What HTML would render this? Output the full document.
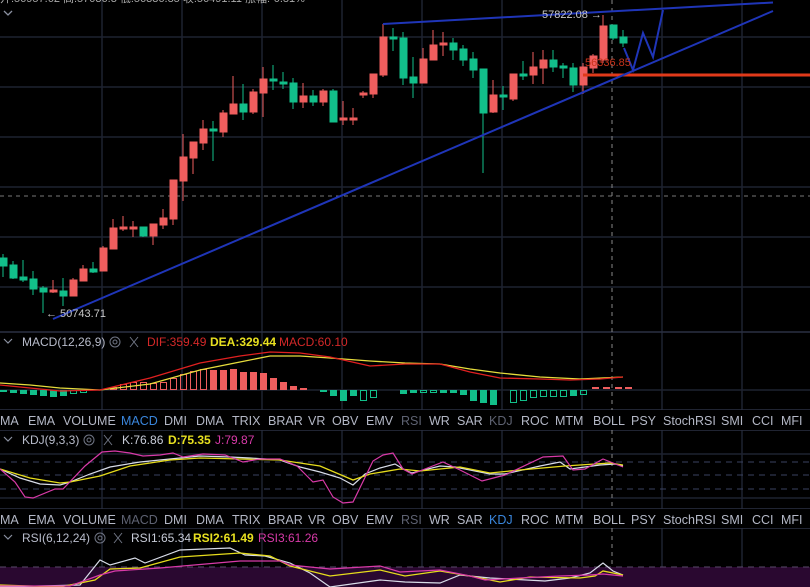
<!DOCTYPE html>
<html><head><meta charset="utf-8"><style>
html,body{margin:0;padding:0;background:#000;width:810px;height:587px;overflow:hidden}
svg{display:block;font-family:"Liberation Sans",sans-serif}
</style></head><body>
<svg width="810" height="587" viewBox="0 0 810 587" xmlns="http://www.w3.org/2000/svg">
<rect width="810" height="587" fill="#000"/>
<!-- grid -->
<g stroke="#1e2230" stroke-width="1.5">
<line x1="102" y1="0" x2="102" y2="587"/><line x1="182" y1="0" x2="182" y2="587"/><line x1="262" y1="0" x2="262" y2="587"/><line x1="342" y1="0" x2="342" y2="587"/><line x1="422" y1="0" x2="422" y2="587"/><line x1="502" y1="0" x2="502" y2="587"/><line x1="582" y1="0" x2="582" y2="587"/><line x1="662" y1="0" x2="662" y2="587"/><line x1="742" y1="0" x2="742" y2="587"/>
<line x1="0" y1="37" x2="810" y2="37"/><line x1="0" y1="87" x2="810" y2="87"/><line x1="0" y1="137" x2="810" y2="137"/><line x1="0" y1="187" x2="810" y2="187"/><line x1="0" y1="237" x2="810" y2="237"/><line x1="0" y1="287" x2="810" y2="287"/>
<line x1="0" y1="390" x2="810" y2="390"/><line x1="0" y1="454" x2="810" y2="454"/><line x1="0" y1="498" x2="810" y2="498"/>
</g>
<g stroke="#2a3042" stroke-width="1.5"><line x1="0" y1="332" x2="810" y2="332"/><line x1="0" y1="410" x2="810" y2="410"/><line x1="0" y1="430" x2="810" y2="430"/><line x1="0" y1="509" x2="810" y2="509"/><line x1="0" y1="528" x2="810" y2="528"/></g>
<rect x="0" y="410" width="810" height="20" fill="#000"/><rect x="0" y="509" width="810" height="19" fill="#000"/>
<line x1="0" y1="196" x2="810" y2="196" stroke="#777" stroke-dasharray="4,4"/>
<line x1="612" y1="0" x2="612" y2="410" stroke="#888" stroke-dasharray="4,4"/>
<line x1="612" y1="430" x2="612" y2="509" stroke="#888" stroke-dasharray="4,4"/>
<line x1="612" y1="528" x2="612" y2="587" stroke="#888" stroke-dasharray="4,4"/>
<g stroke="#3a4260" stroke-dasharray="6,5"><line x1="0" y1="462" x2="810" y2="462"/><line x1="0" y1="475" x2="810" y2="475"/><line x1="0" y1="489" x2="810" y2="489"/></g>
<!-- top text -->
<text x="0" y="2" font-size="11" fill="#aaa">开:56957.62 高:57036.3 低:56336.85 收:56491.11 涨幅:-0.81%</text>
<path d="M4 11 L8 15 L12 11" stroke="#8a90a0" stroke-width="1.3" fill="none"/>
<!-- candles -->
<g stroke-width="1">
<g fill="#ef5e5e" stroke="#ef5e5e">
<line x1="53" y1="280" x2="53" y2="293"/><rect x="50" y="290" width="7" height="2"/>
<line x1="73" y1="278" x2="73" y2="296"/><rect x="70" y="280" width="7" height="16"/>
<line x1="83" y1="265" x2="83" y2="281"/><rect x="80" y="269" width="7" height="12"/>
<line x1="103" y1="246" x2="103" y2="271"/><rect x="100" y="248" width="7" height="23"/>
<line x1="113" y1="219" x2="113" y2="249"/><rect x="110" y="228" width="7" height="21"/>
<line x1="123" y1="216" x2="123" y2="231"/><rect x="120" y="227" width="7" height="2"/>
<line x1="133" y1="221" x2="133" y2="237"/><rect x="130" y="227" width="7" height="2"/>
<line x1="153" y1="224" x2="153" y2="245"/><rect x="150" y="224" width="7" height="12"/>
<line x1="163" y1="209" x2="163" y2="229"/><rect x="160" y="218" width="7" height="7"/>
<line x1="173" y1="180" x2="173" y2="225"/><rect x="170" y="180" width="7" height="39"/>
<line x1="183" y1="134" x2="183" y2="201"/><rect x="180" y="157" width="7" height="24"/>
<line x1="193" y1="142" x2="193" y2="174"/><rect x="190" y="142" width="7" height="16"/>
<line x1="203" y1="120" x2="203" y2="150"/><rect x="200" y="129" width="7" height="14"/>
<line x1="223" y1="110" x2="223" y2="137"/><rect x="220" y="113" width="7" height="19"/>
<line x1="233" y1="76" x2="233" y2="114"/><rect x="230" y="104" width="7" height="10"/>
<line x1="253" y1="89" x2="253" y2="114"/><rect x="250" y="92" width="7" height="20"/>
<line x1="263" y1="67" x2="263" y2="117"/><rect x="260" y="79" width="7" height="14"/>
<line x1="303" y1="83" x2="303" y2="108"/><rect x="300" y="96" width="7" height="6"/>
<line x1="323" y1="89" x2="323" y2="106"/><rect x="320" y="91" width="7" height="11"/>
<line x1="343" y1="101" x2="343" y2="125"/><rect x="340" y="118" width="7" height="2"/>
<line x1="353" y1="108" x2="353" y2="125"/><rect x="350" y="118" width="7" height="2"/>
<line x1="363" y1="91" x2="363" y2="98"/><rect x="360" y="93" width="7" height="2"/>
<line x1="373" y1="74" x2="373" y2="98"/><rect x="370" y="74" width="7" height="20"/>
<line x1="383" y1="24" x2="383" y2="77"/><rect x="380" y="37" width="7" height="38"/>
<line x1="423" y1="48" x2="423" y2="83"/><rect x="420" y="59" width="7" height="24"/>
<line x1="433" y1="30" x2="433" y2="60"/><rect x="430" y="45" width="7" height="15"/>
<line x1="443" y1="32" x2="443" y2="56"/><rect x="440" y="43" width="7" height="2"/>
<line x1="493" y1="80" x2="493" y2="113"/><rect x="490" y="95" width="7" height="17"/>
<line x1="513" y1="74" x2="513" y2="101"/><rect x="510" y="74" width="7" height="25"/>
<line x1="533" y1="52" x2="533" y2="84"/><rect x="530" y="67" width="7" height="8"/>
<line x1="543" y1="50" x2="543" y2="84"/><rect x="540" y="60" width="7" height="8"/>
<line x1="583" y1="63" x2="583" y2="94"/><rect x="580" y="67" width="7" height="18"/>
<line x1="593" y1="54" x2="593" y2="73"/><rect x="590" y="56" width="7" height="12"/>
<line x1="603" y1="15" x2="603" y2="63"/><rect x="600" y="26" width="7" height="34"/>
</g>
<g fill="#12bf8a" stroke="#12bf8a">
<line x1="3" y1="254" x2="3" y2="277"/><rect x="0" y="258" width="7" height="8"/>
<line x1="13" y1="261" x2="13" y2="279"/><rect x="10" y="265" width="7" height="13"/>
<line x1="23" y1="260" x2="23" y2="282"/><rect x="20" y="277" width="7" height="3"/>
<line x1="33" y1="271" x2="33" y2="295"/><rect x="30" y="279" width="7" height="10"/>
<line x1="43" y1="286" x2="43" y2="313"/><rect x="40" y="288" width="7" height="4"/>
<line x1="63" y1="278" x2="63" y2="306"/><rect x="60" y="291" width="7" height="5"/>
<line x1="93" y1="262" x2="93" y2="273"/><rect x="90" y="269" width="7" height="3"/>
<line x1="143" y1="227" x2="143" y2="237"/><rect x="140" y="227" width="7" height="9"/>
<line x1="213" y1="121" x2="213" y2="161"/><rect x="210" y="129" width="7" height="2"/>
<line x1="243" y1="84" x2="243" y2="120"/><rect x="240" y="104" width="7" height="8"/>
<line x1="273" y1="65" x2="273" y2="90"/><rect x="270" y="79" width="7" height="2"/>
<line x1="283" y1="72" x2="283" y2="89"/><rect x="280" y="82" width="7" height="2"/>
<line x1="293" y1="78" x2="293" y2="109"/><rect x="290" y="83" width="7" height="19"/>
<line x1="313" y1="90" x2="313" y2="106"/><rect x="310" y="96" width="7" height="6"/>
<line x1="333" y1="89" x2="333" y2="122"/><rect x="330" y="91" width="7" height="31"/>
<line x1="393" y1="28" x2="393" y2="51"/><rect x="390" y="37" width="7" height="2"/>
<line x1="403" y1="32" x2="403" y2="85"/><rect x="400" y="38" width="7" height="40"/>
<line x1="413" y1="57" x2="413" y2="98"/><rect x="410" y="77" width="7" height="6"/>
<line x1="453" y1="38" x2="453" y2="60"/><rect x="450" y="43" width="7" height="7"/>
<line x1="463" y1="45" x2="463" y2="66"/><rect x="460" y="49" width="7" height="11"/>
<line x1="473" y1="52" x2="473" y2="78"/><rect x="470" y="59" width="7" height="11"/>
<line x1="483" y1="69" x2="483" y2="173"/><rect x="480" y="69" width="7" height="44"/>
<line x1="503" y1="86" x2="503" y2="110"/><rect x="500" y="95" width="7" height="2"/>
<line x1="523" y1="61" x2="523" y2="80"/><rect x="520" y="74" width="7" height="2"/>
<line x1="553" y1="50" x2="553" y2="72"/><rect x="550" y="60" width="7" height="7"/>
<line x1="563" y1="63" x2="563" y2="78"/><rect x="560" y="66" width="7" height="2"/>
<line x1="573" y1="63" x2="573" y2="92"/><rect x="570" y="68" width="7" height="17"/>
<line x1="613" y1="25" x2="613" y2="40"/><rect x="610" y="25" width="7" height="13"/>
<line x1="623" y1="30" x2="623" y2="47"/><rect x="620" y="37" width="7" height="6"/>
</g>
</g>
<!-- drawings -->
<line x1="583" y1="75" x2="810" y2="75" stroke="#e03a1a" stroke-width="3"/>
<g stroke="#1f35b8" stroke-width="2" fill="none">
<line x1="53" y1="319" x2="773" y2="11"/>
<line x1="383" y1="24" x2="773" y2="2.5"/>
<polyline points="624,48 633,70 643,33 653,57 663,10"/>
</g>
<text x="585" y="66" font-size="11" fill="#c8341c">56336.85</text>
<text x="542" y="18" font-size="11" fill="#c8c8c8">57822.08 →</text>
<text x="46" y="317" font-size="11" fill="#c8c8c8">← 50743.71</text>
<!-- MACD pane -->
<g font-size="12">
<path d="M4 339 L8 343 L12 339" stroke="#8a90a0" stroke-width="1.2" fill="none"/>
<text x="22" y="346" fill="#b8bccb">MACD(12,26,9)</text>
<circle cx="115" cy="342" r="5" stroke="#707584" fill="none"/><circle cx="115" cy="342" r="2" stroke="#707584" fill="none"/>
<path d="M130 337 L138 347 M138 337 L130 347" stroke="#707584"/>
<text x="147" y="346" fill="#d42828">DIF:359.49</text>
<text x="210" y="346" fill="#e8e020" font-weight="bold">DEA:329.44</text>
<text x="279" y="346" fill="#d42828">MACD:60.10</text>
</g>
<g fill="#12bf8a">
<rect x="0" y="390" width="7" height="2"/><rect x="10" y="390" width="7" height="3"/><rect x="20" y="390" width="7" height="4"/><rect x="30" y="390" width="7" height="5"/><rect x="40" y="390" width="7" height="6"/><rect x="50" y="390" width="7" height="7"/><rect x="60" y="390" width="7" height="6"/>
<rect x="320" y="390" width="7" height="2"/><rect x="330" y="390" width="7" height="6"/><rect x="340" y="390" width="7" height="11"/><rect x="350" y="390" width="7" height="6"/><rect x="400" y="390" width="7" height="4"/><rect x="410" y="390" width="7" height="3"/><rect x="440" y="390" width="7" height="3"/><rect x="450" y="390" width="7" height="3"/><rect x="460" y="390" width="7" height="5"/><rect x="470" y="390" width="7" height="11"/><rect x="480" y="390" width="7" height="13"/><rect x="490" y="390" width="7" height="15"/><rect x="570" y="390" width="7" height="6"/>
</g>
<g fill="none" stroke="#12bf8a">
<rect x="70.5" y="390.5" width="6" height="3"/><rect x="80.5" y="390.5" width="6" height="2"/><rect x="360.5" y="390.5" width="6" height="10"/><rect x="370.5" y="390.5" width="6" height="7"/><rect x="420.5" y="390.5" width="6" height="2"/><rect x="430.5" y="390.5" width="6" height="2"/>
<rect x="510.5" y="390.5" width="6" height="12"/><rect x="520.5" y="390.5" width="6" height="10"/><rect x="530.5" y="390.5" width="6" height="7"/><rect x="540.5" y="390.5" width="6" height="6"/><rect x="550.5" y="390.5" width="6" height="6"/><rect x="560.5" y="390.5" width="6" height="6"/><rect x="580.5" y="390.5" width="6" height="4"/>
</g>
<g fill="none" stroke="#ef5e5e">
<rect x="110.5" y="387.5" width="6" height="2"/><rect x="120.5" y="384.5" width="6" height="5"/><rect x="130.5" y="382.5" width="6" height="7"/><rect x="140.5" y="382.5" width="6" height="7"/><rect x="150.5" y="383.5" width="6" height="6"/><rect x="160.5" y="382.5" width="6" height="7"/><rect x="170.5" y="378.5" width="6" height="11"/><rect x="180.5" y="374.5" width="6" height="15"/><rect x="190.5" y="371.5" width="6" height="18"/><rect x="200.5" y="369.5" width="6" height="20"/>
</g>
<g fill="#ef5e5e">
<rect x="210" y="370" width="7" height="20"/><rect x="220" y="370" width="7" height="20"/><rect x="230" y="369" width="7" height="21"/><rect x="240" y="372" width="7" height="18"/><rect x="250" y="372" width="7" height="18"/><rect x="260" y="373" width="7" height="17"/><rect x="270" y="378" width="7" height="12"/><rect x="280" y="382" width="7" height="8"/><rect x="290" y="386" width="7" height="4"/><rect x="300" y="388" width="7" height="2"/>
<rect x="592" y="387" width="7" height="2"/><rect x="603" y="387" width="7" height="2"/><rect x="615" y="387" width="7" height="2"/><rect x="625" y="387" width="7" height="2"/>
</g>
<polyline fill="none" stroke="#e6dc3c" stroke-width="1.3" points="0,383 30,385 60,388 100,390 150,384 200,370 240,362 270,356 300,356 330,358 370,361 405,363 440,364 470,369 500,373 540,377 580,379 623,377"/>
<polyline fill="none" stroke="#e02020" stroke-width="1.3" points="0,385 30,388 60,391 100,390 150,378 200,363 240,356 270,352 300,353 330,357 370,366 405,364 440,364 470,372 500,378 540,379 570,380 600,379 623,377"/>
<!-- toolbars -->
<g font-size="12.5" fill="#b4b8c6">
<text x="0" y="425">MA</text><text x="28" y="425">EMA</text><text x="63" y="425">VOLUME</text><text x="121" y="425" fill="#3a86dc">MACD</text><text x="164" y="425">DMI</text><text x="196" y="425">DMA</text><text x="232" y="425">TRIX</text><text x="268" y="425">BRAR</text><text x="308" y="425">VR</text><text x="332" y="425">OBV</text><text x="366" y="425">EMV</text><text x="401" y="425" fill="#5e6272">RSI</text><text x="429" y="425">WR</text><text x="457" y="425">SAR</text><text x="489" y="425" fill="#5e6272">KDJ</text><text x="521" y="425">ROC</text><text x="555" y="425">MTM</text><text x="593" y="425">BOLL</text><text x="631" y="425">PSY</text><text x="663" y="425">StochRSI</text><text x="721" y="425">SMI</text><text x="752" y="425">CCI</text><text x="781" y="425">MFI</text>
</g>
<g font-size="12.5" fill="#b4b8c6">
<text x="0" y="524">MA</text><text x="28" y="524">EMA</text><text x="63" y="524">VOLUME</text><text x="121" y="524" fill="#5e6272">MACD</text><text x="164" y="524">DMI</text><text x="196" y="524">DMA</text><text x="232" y="524">TRIX</text><text x="268" y="524">BRAR</text><text x="308" y="524">VR</text><text x="332" y="524">OBV</text><text x="366" y="524">EMV</text><text x="401" y="524" fill="#5e6272">RSI</text><text x="429" y="524">WR</text><text x="457" y="524">SAR</text><text x="489" y="524" fill="#3a86dc">KDJ</text><text x="521" y="524">ROC</text><text x="555" y="524">MTM</text><text x="593" y="524">BOLL</text><text x="631" y="524">PSY</text><text x="663" y="524">StochRSI</text><text x="721" y="524">SMI</text><text x="752" y="524">CCI</text><text x="781" y="524">MFI</text>
</g>
<!-- KDJ pane -->
<g font-size="12">
<path d="M4 437 L8 441 L12 437" stroke="#8a90a0" stroke-width="1.2" fill="none"/>
<text x="22" y="444" fill="#b8bccb">KDJ(9,3,3)</text>
<circle cx="89" cy="440" r="5" stroke="#707584" fill="none"/><circle cx="89" cy="440" r="2" stroke="#707584" fill="none"/>
<path d="M104 435 L112 445 M112 435 L104 445" stroke="#707584"/>
<text x="122" y="444" fill="#c8ccd8">K:76.86</text>
<text x="168" y="444" fill="#e8e020" font-weight="bold">D:75.35</text>
<text x="215" y="444" fill="#d83aa8">J:79.87</text>
</g>
<polyline fill="none" stroke="#d8dce8" stroke-width="1.2" points="0,469 20,478 40,484 60,485 70,482 90,474 110,467 140,462 180,458 200,456 230,457 250,458 280,460 300,467 320,472 340,478 353,485 365,474 380,468 395,464 405,470 412,473 440,466 455,467 490,474 505,474 540,466 560,462 570,469 600,465 615,464 623,466"/>
<polyline fill="none" stroke="#e6dc1c" stroke-width="1.3" points="0,469 30,478 60,483 70,482 100,476 130,466 170,460 200,458 240,459 280,460 320,466 353,480 370,474 400,469 420,471 460,467 490,473 520,470 565,466 610,463 623,465"/>
<polyline fill="none" stroke="#d83aa8" stroke-width="1.2" points="0,469 15,482 25,497 33,498 55,489 63,489 85,466 102,452 115,451 130,453 143,456 160,455 173,453 183,457 203,454 225,455 243,462 260,459 280,459 297,466 313,482 323,480 333,497 343,503 353,502 373,461 383,455 393,453 403,469 412,474 443,462 460,470 482,481 505,475 543,457 563,456 573,470 585,469 603,459 623,467"/>
<!-- RSI pane -->
<rect x="0" y="567" width="810" height="20" fill="#2a0830"/>
<line x1="0" y1="567" x2="810" y2="567" stroke="#5a4a6a" stroke-dasharray="6,5"/>
<g font-size="12">
<path d="M4 535 L8 539 L12 535" stroke="#8a90a0" stroke-width="1.2" fill="none"/>
<text x="22" y="542" fill="#b8bccb">RSI(6,12,24)</text>
<circle cx="100" cy="538" r="5" stroke="#707584" fill="none"/><circle cx="100" cy="538" r="2" stroke="#707584" fill="none"/>
<path d="M114 533 L122 543 M122 533 L114 543" stroke="#707584"/>
<text x="131" y="542" fill="#c8ccd8">RSI1:65.34</text>
<text x="193" y="542" fill="#e8e020" font-weight="bold">RSI2:61.49</text>
<text x="258" y="542" fill="#d83aa8">RSI3:61.26</text>
</g>
<polyline fill="none" stroke="#d8dce8" stroke-width="1.2" points="0,587 80,585 100,560 110,565 135,558 145,563 180,550 230,548 245,555 265,556 290,563 310,573 330,587 380,580 405,582 440,583 460,575 490,578 545,581 570,578 590,573 603,563 613,571 623,575"/>
<polyline fill="none" stroke="#e6dc1c" stroke-width="1.3" points="0,585 60,587 95,580 110,569 140,568 180,557 240,553 270,556 290,566 330,576 380,570 405,576 440,571 470,576 500,582 530,577 580,578 595,576 603,571 623,575"/>
<polyline fill="none" stroke="#d83aa8" stroke-width="1.2" points="0,586 70,586 100,575 115,571 160,568 240,561 280,561 290,565 330,569 380,566 400,572 440,570 470,576 485,580 520,578 560,576 590,575 603,574 623,576"/>
</svg>
</body></html>
